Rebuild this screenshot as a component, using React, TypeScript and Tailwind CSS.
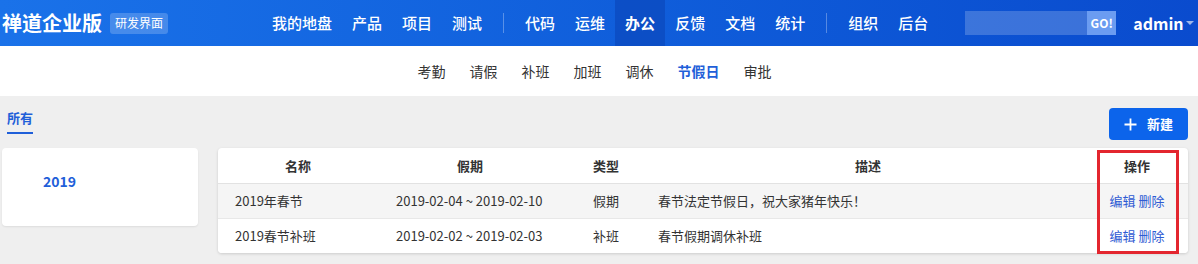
import React from 'react';

const font = { fontFamily: '"Noto Sans CJK SC", "Noto Sans", sans-serif' };

const navLeft = ['我的地盘', '产品', '项目', '测试'];
const navMid = ['代码', '运维', '办公', '反馈', '文档', '统计'];
const navRight = ['组织', '后台'];
const subNav = ['考勤', '请假', '补班', '加班', '调休', '节假日', '审批'];

const rows = [
  { name: '2019年春节', range: '2019-02-04 ~ 2019-02-10', type: '假期', desc: '春节法定节假日，祝大家猪年快乐！' },
  { name: '2019春节补班', range: '2019-02-02 ~ 2019-02-03', type: '补班', desc: '春节假期调休补班' },
];

function NavItem({ label }: { label: string }) {
  const active = label === '办公';
  return (
    <a
      className={
        'h-[46px] flex items-center px-[10px] text-[15px] text-white ' +
        (active ? 'bg-[#0a45b8]/60 font-bold' : 'font-medium')
      }
    >
      {label}
    </a>
  );
}

function Divider() {
  return <div className="w-px h-[20px] bg-white/30 mx-[11px]" />;
}

export default function App() {
  return (
    <div className="w-[1198px] h-[264px] bg-[#efefef] overflow-hidden" style={font}>
      {/* Header */}
      <header className="h-[46px] flex items-center bg-gradient-to-r from-[#1a72e9] to-[#0a4bce]">
        <div className="pl-[2px] text-[20px] font-bold text-white leading-none">禅道企业版</div>
        <span className="ml-[8px] px-[5px] h-[21px] flex items-center rounded-[3px] bg-white/20 text-[12px] text-white">
          研发界面
        </span>
        <nav className="ml-[94px] flex items-center">
          {navLeft.map((l) => <NavItem key={l} label={l} />)}
          <Divider />
          {navMid.map((l) => <NavItem key={l} label={l} />)}
          <Divider />
          {navRight.map((l) => <NavItem key={l} label={l} />)}
        </nav>
        <div className="ml-[27px] flex items-center h-[24px]">
          <div className="w-[122px] h-full bg-white/20" />
          <button className="w-[29px] h-full bg-[#6b9cf1] text-white text-[12px] font-bold">GO!</button>
        </div>
        <div className="ml-[17px] flex items-center text-white text-[16px] font-semibold">
          admin
          <span className="ml-[2px] w-0 h-0 border-l-[4px] border-r-[4px] border-t-[4px] border-l-transparent border-r-transparent border-t-white/60" />
        </div>
      </header>

      {/* Sub nav */}
      <div className="h-[50px] bg-white flex items-center justify-center gap-6 pr-[9px]">
        {subNav.map((s) => (
          <a
            key={s}
            className={
              'text-[14px] ' + (s === '节假日' ? 'text-[#1f5fd9] font-bold' : 'text-[#333]')
            }
          >
            {s}
          </a>
        ))}
      </div>

      {/* Body */}
      <div className="relative pl-[2px] pr-[10px]">
        <div className="flex items-start justify-between h-[52px] pt-[12px]">
          <div className="ml-[5px] flex flex-col">
            <span className="text-[13px] font-bold text-[#1f5fd9] leading-[20px]">所有</span>
            <span className="mt-[4px] h-[2px] w-[26px] bg-[#1f5fd9]" />
          </div>
          <button className="h-[32px] w-[79px] rounded-[4px] bg-[#0c64eb] text-white text-[13px] font-bold flex items-center justify-center gap-[10px]">
            <svg width="13" height="13" viewBox="0 0 13 13">
              <path d="M6.5 0.5v12M0.5 6.5h12" stroke="white" strokeWidth="1.8" />
            </svg>
            新建
          </button>
        </div>

        <div className="flex items-start gap-[20px]">
          <div className="w-[196px] h-[78px] bg-white rounded-[4px] shadow-[0_1px_2px_rgba(0,0,0,0.08)] pl-[41px] pt-[20px]">
            <span className="text-[14px] font-bold text-[#1f5fd9]">2019</span>
          </div>

          <div className="flex-1 bg-white rounded-[4px] shadow-[0_1px_3px_rgba(0,0,0,0.15)] overflow-hidden">
            <table className="w-full border-collapse text-[13px] text-[#333]">
              <colgroup>
                <col className="w-[160px]" />
                <col className="w-[184px]" />
                <col className="w-[88px]" />
                <col className="w-[436px]" />
                <col />
              </colgroup>
              <thead>
                <tr className="h-[35px] border-b border-[#e2e2e2]">
                  {['名称', '假期', '类型', '描述', '操作'].map((h) => (
                    <th key={h} className="font-bold text-center">{h}</th>
                  ))}
                </tr>
              </thead>
              <tbody>
                {rows.map((r, i) => (
                  <tr
                    key={r.name}
                    className={'h-[35px] ' + (i % 2 === 0 ? 'bg-[#f5f5f5] border-b border-[#e8e8e8]' : 'bg-white')}
                  >
                    <td className="pl-[17px]">{r.name}</td>
                    <td className="pl-[18px]">{r.range}</td>
                    <td className="text-center">{r.type}</td>
                    <td className="pl-[8px]">{r.desc}</td>
                    <td className="text-center text-[#2f5bd3]">
                      <a>编辑</a> <a>删除</a>
                    </td>
                  </tr>
                ))}
              </tbody>
            </table>
          </div>
        </div>

        {/* annotation box */}
        <div className="absolute left-[1097px] top-[54px] w-[82px] h-[104px] border-[3px] border-[#e3262f] pointer-events-none" />
      </div>
    </div>
  );
}
